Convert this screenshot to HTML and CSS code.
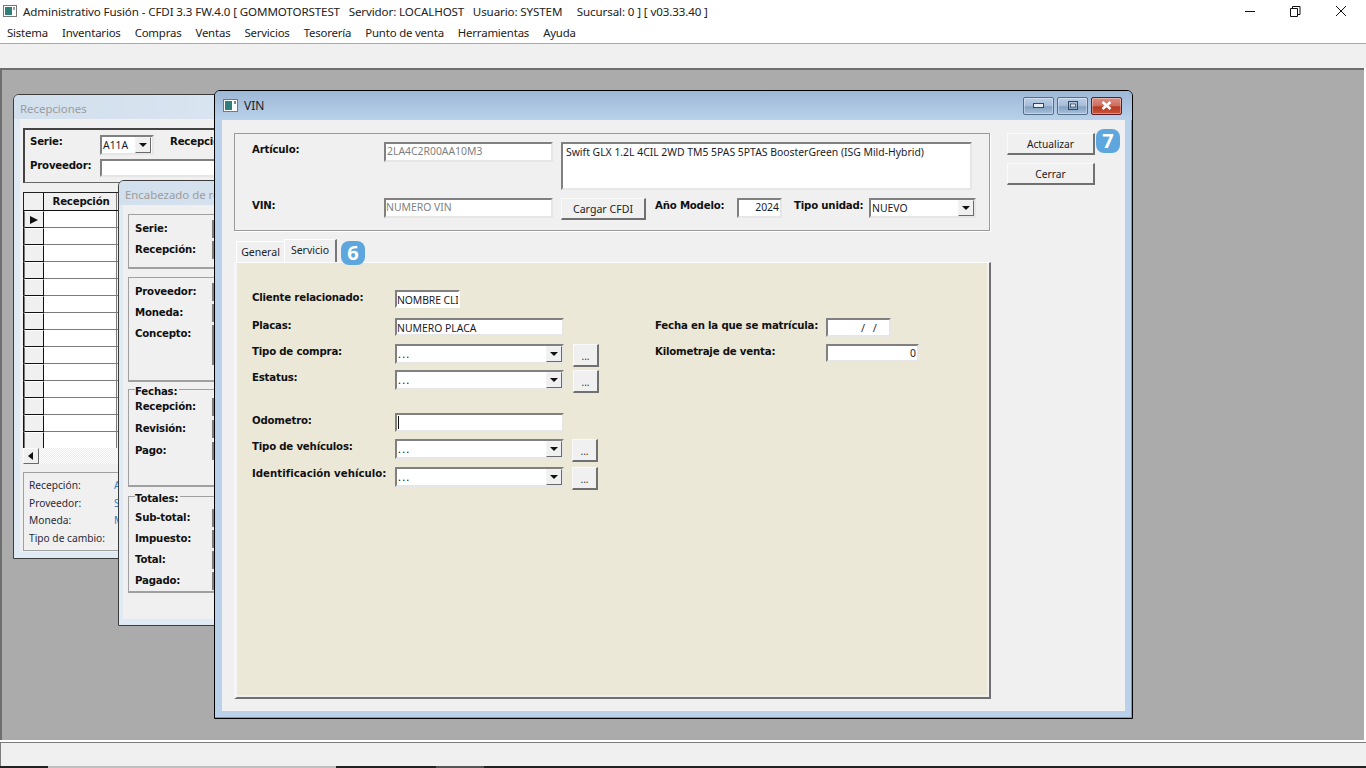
FILE: index.html
```html
<!DOCTYPE html>
<html lang="es">
<head>
<meta charset="utf-8">
<title>Administrativo Fusión</title>
<link rel="stylesheet" href="styles.css">
</head>
<body>
<div class="app">
  <header class="titlebar">
    <svg class="appicon" width="14" height="12" viewBox="0 0 14 12"><rect x=".5" y=".5" width="13" height="11" fill="#fff" stroke="#777"/><rect x="2" y="2" width="7" height="8" fill="#2f7f7a"/><rect x="10" y="2" width="2" height="3" fill="#8aa"/></svg>
    <span class="apptitle">Administrativo Fusión - CFDI 3.3 FW.4.0 [ GOMMOTORSTEST   Servidor: LOCALHOST   Usuario: SYSTEM     Sucursal: 0 ] [ v03.33.40 ]</span>
    <div class="caption">
      <svg width="46" height="20" viewBox="0 0 46 20"><path d="M19 10.5h10" stroke="#111" fill="none"/></svg>
      <svg width="46" height="20" viewBox="0 0 46 20"><path d="M18.5 7.5h7v8h-7zM20.5 7.5v-2h7.500v8h-2" stroke="#111" fill="none"/></svg>
      <svg width="46" height="20" viewBox="0 0 46 20"><path d="M18 5l10 10M28 5l-10 10" stroke="#111" fill="none"/></svg>
    </div>
  </header>
  <nav class="menubar">
    <span>Sistema</span><span>Inventarios</span><span>Compras</span><span>Ventas</span><span>Servicios</span><span>Tesorería</span><span>Punto de venta</span><span>Herramientas</span><span>Ayuda</span>
  </nav>
  <div class="toolbar"></div>
  <main class="desktop">

    <section class="win win-rec">
      <div class="wintitle inactive">Recepciones</div>
      <div class="client rec-client">
        <div class="rec-head">
          <div class="rec-row">
            <b class="lbl rec-lbl">Serie:</b>
            <div class="field combo rec-serie"><span class="val">A11A</span><i class="dd"></i></div>
            <b class="lbl rec-second">Recepción:</b>
          </div>
          <div class="rec-row rec-row2">
            <b class="lbl rec-lbl">Proveedor:</b>
            <div class="field rec-prov"></div>
          </div>
        </div>
        <div class="dgrid">
          <div class="dg-row dg-header"><span class="dg-sel"></span><b class="dg-cell">Recepción</b></div>
          <div class="dg-row"><span class="dg-sel"><svg width="10" height="8" viewBox="0 0 10 8"><path d="M1 0v8l8-4z" fill="#111"/></svg></span><span class="dg-cell"></span></div>
          <div class="dg-row"><span class="dg-sel"></span><span class="dg-cell"></span></div>
          <div class="dg-row"><span class="dg-sel"></span><span class="dg-cell"></span></div>
          <div class="dg-row"><span class="dg-sel"></span><span class="dg-cell"></span></div>
          <div class="dg-row"><span class="dg-sel"></span><span class="dg-cell"></span></div>
          <div class="dg-row"><span class="dg-sel"></span><span class="dg-cell"></span></div>
          <div class="dg-row"><span class="dg-sel"></span><span class="dg-cell"></span></div>
          <div class="dg-row"><span class="dg-sel"></span><span class="dg-cell"></span></div>
          <div class="dg-row"><span class="dg-sel"></span><span class="dg-cell"></span></div>
          <div class="dg-row"><span class="dg-sel"></span><span class="dg-cell"></span></div>
          <div class="dg-row"><span class="dg-sel"></span><span class="dg-cell"></span></div>
          <div class="dg-row"><span class="dg-sel"></span><span class="dg-cell"></span></div>
          <div class="dg-row"><span class="dg-sel"></span><span class="dg-cell"></span></div>
          <div class="dg-row dg-last"><span class="dg-sel"></span><span class="dg-cell"></span></div>
          <div class="dg-scroll"><span class="sb-btn"><svg width="6" height="8" viewBox="0 0 6 8"><path d="M5 0v8L0 4z" fill="#111"/></svg></span></div>
        </div>
        <div class="rec-info">
          <div class="info-row"><span class="info-lbl">Recepción:</span><span class="info-val">A</span></div>
          <div class="info-row"><span class="info-lbl">Proveedor:</span><span class="info-val">S</span></div>
          <div class="info-row"><span class="info-lbl">Moneda:</span><span class="info-val">M</span></div>
          <div class="info-row"><span class="info-lbl">Tipo de cambio:</span></div>
        </div>
      </div>
    </section>

    <section class="win win-enc">
      <div class="wintitle inactive">Encabezado de re</div>
      <div class="client enc-client">
        <div class="gbox g1">
          <div class="enc-row"><b class="lbl">Serie:</b><i class="edge"></i></div>
          <div class="enc-row"><b class="lbl">Recepción:</b><i class="edge"></i></div>
        </div>
        <div class="gbox g2">
          <div class="enc-row"><b class="lbl">Proveedor:</b><i class="edge"></i></div>
          <div class="enc-row"><b class="lbl">Moneda:</b><i class="edge"></i></div>
          <div class="enc-row"><b class="lbl">Concepto:</b><i class="edge tall"></i></div>
        </div>
        <div class="gbox g3">
          <b class="legend">Fechas:</b>
          <div class="enc-row"><b class="lbl">Recepción:</b><i class="edge"></i></div>
          <div class="enc-row"><b class="lbl">Revisión:</b><i class="edge"></i></div>
          <div class="enc-row"><b class="lbl">Pago:</b><i class="edge"></i></div>
        </div>
        <div class="gbox g4">
          <b class="legend">Totales:</b>
          <div class="enc-row"><b class="lbl">Sub-total:</b><i class="edge"></i></div>
          <div class="enc-row"><b class="lbl">Impuesto:</b><i class="edge"></i></div>
          <div class="enc-row"><b class="lbl">Total:</b><i class="edge"></i></div>
          <div class="enc-row"><b class="lbl">Pagado:</b><i class="edge"></i></div>
        </div>
      </div>
    </section>

    <section class="win win-vin">
      <div class="wintitle active">
        <svg class="vinicon" width="15" height="13" viewBox="0 0 15 13"><rect x=".5" y=".5" width="14" height="12" fill="#fff" stroke="#777"/><rect x="2" y="2" width="7" height="9" fill="#2f7f7a"/><rect x="11" y="2" width="2" height="3" fill="#789"/></svg>
        <span>VIN</span>
        <div class="winbtns">
          <span class="wb"><svg width="12" height="7" viewBox="0 0 12 7"><rect x=".5" y="1.500" width="10" height="4" fill="#e8eef5" stroke="#33465c"/></svg></span>
          <span class="wb"><svg width="12" height="9" viewBox="0 0 12 9"><rect x="1.500" y=".5" width="9" height="8" fill="none" stroke="#33465c"/><rect x="3.500" y="3" width="5" height="3" fill="#e8eef5" stroke="#33465c" stroke-width=".8"/></svg></span>
          <span class="wb wb-close"><svg width="13" height="9" viewBox="0 0 13 9"><path d="M2.500 1l8 7M10.500 1l-8 7" stroke="#fff" stroke-width="2.600"/></svg></span>
        </div>
      </div>
      <div class="client vin-client">
        <div class="vin-main">
          <div class="art-box">
            <div class="art-top">
              <b class="lbl art-lbl">Artículo:</b>
              <div class="field art-code disabled">2LA4C2R00AA10M3</div>
              <div class="field art-desc">Swift GLX 1.2L 4CIL 2WD TM5 5PAS 5PTAS BoosterGreen (ISG Mild-Hybrid)</div>
            </div>
            <div class="art-bottom">
              <b class="lbl art-lbl">VIN:</b>
              <div class="field art-code disabled vin-code">NUMERO VIN</div>
              <button class="btn cfdi">Cargar CFDI</button>
              <b class="lbl anio-lbl">Año Modelo:</b>
              <div class="field anio">2024</div>
              <b class="lbl tipo-lbl">Tipo unidad:</b>
              <div class="field combo tipo"><span class="val">NUEVO</span><i class="dd"></i></div>
            </div>
          </div>
          <div class="tabs">
            <span class="tab tab-off">General</span>
            <span class="tab tab-on">Servicio</span>
            <span class="badge badge6">6</span>
          </div>
          <div class="panel">
            <div class="pcol pleft">
              <div class="prow r-cli"><b class="lbl plbl">Cliente relacionado:</b><div class="field pf-cli">NOMBRE CLI</div></div>
              <div class="prow r-pla"><b class="lbl plbl">Placas:</b><div class="field pf-long">NUMERO PLACA</div></div>
              <div class="prow r-com"><b class="lbl plbl">Tipo de compra:</b><div class="field combo pf-sel"><span class="val">...</span><i class="dd"></i></div><button class="btn more">...</button></div>
              <div class="prow r-est"><b class="lbl plbl">Estatus:</b><div class="field combo pf-sel"><span class="val">...</span><i class="dd"></i></div><button class="btn more">...</button></div>
              <div class="prow r-odo"><b class="lbl plbl">Odometro:</b><div class="field pf-long pf-odo"><i class="caret"></i></div></div>
              <div class="prow r-veh"><b class="lbl plbl">Tipo de vehículos:</b><div class="field combo pf-sel"><span class="val">...</span><i class="dd"></i></div><button class="btn more more2">...</button></div>
              <div class="prow r-ide"><b class="lbl plbl">Identificación vehículo:</b><div class="field combo pf-sel"><span class="val">...</span><i class="dd"></i></div><button class="btn more more2">...</button></div>
            </div>
            <div class="pcol pright">
              <div class="prow r-fec"><b class="lbl rlbl">Fecha en la que se matrícula:</b><div class="field pf-fec"><span class="slashes">/  /</span></div></div>
              <div class="prow r-km"><b class="lbl rlbl">Kilometraje de venta:</b><div class="field pf-km">0</div></div>
            </div>
          </div>
        </div>
        <aside class="vin-side">
          <div class="side-row"><button class="btn side">Actualizar</button><span class="badge badge7">7</span></div>
          <button class="btn side">Cerrar</button>
        </aside>
      </div>
    </section>

  </main>
  <div class="statusbar"></div>
  <div class="taskstrip"><span class="ts-a"></span><span class="ts-b"></span><span class="ts-c"></span><span class="ts-d"></span><span class="ts-e"></span></div>
</div>
</body>
</html>
```
FILE: styles.css
```css
* { box-sizing: border-box; }
html, body { margin: 0; height: 100%; }
body { font-family: "Noto Sans", "Liberation Sans", sans-serif; font-size: 11px; color: #111; overflow: hidden; background: #fff; }
.app { width: 1366px; height: 768px; display: flex; flex-direction: column; }

.titlebar { height: 23px; background: #fff; display: flex; align-items: center; padding-left: 3px; }
.appicon { margin-right: 6px; margin-top: -1px; }
.apptitle { font-size: 11.600px; white-space: pre; letter-spacing: -.12px; color: #222; margin-top: -1px; }
.caption { margin-left: auto; display: flex; margin-top: -2px; padding-right: 2px; }
.caption svg { display: block; }

.menubar { height: 20px; background: #fff; display: flex; gap: 14px; padding-left: 7px; font-size: 11.400px; line-height: 19px; color: #222; letter-spacing: -.18px; }
.toolbar { height: 25px; background: #f0f0f0; border-top: 1px solid #a9a9a9; flex: none; }

.desktop { position: relative; flex: 1; background: #ababab; border-top: 2px solid #6e6e6e; border-left: 2px solid #6e6e6e; margin-right: 2px; overflow: hidden; }

.statusbar { height: 26px; background: #f0f0f0; border-top: 2px solid #fff; box-shadow: inset 0 1px 0 #7c7c7c, inset 1px 0 0 #7c7c7c; flex: none; }
.taskstrip { height: 2px; display: flex; flex: none; }
.ts-a { width: 48px; background: #222; }
.ts-b { width: 288px; background: #c0c0c0; }
.ts-c { width: 100px; background: #222; }
.ts-d { width: 48px; background: #555; }
.ts-e { flex: 1; background: #222; }

.win { position: absolute; display: flex; flex-direction: column; overflow: hidden; border: 1px solid #3c3c3c; border-top-left-radius: 6px; border-top-right-radius: 6px; }
.win-rec { left: 11px; top: 24px; width: 420px; height: 465px; background: #dfeaf5; z-index: 1; padding: 0 6px 6px; }
.win-enc { left: 116px; top: 110px; width: 420px; height: 446px; background: #dfeaf5; z-index: 2; padding: 0 6px 6px 4px; }
.win-vin { left: 212px; top: 20px; width: 919px; height: 629px; background: #b9d1ea; z-index: 3; border-color: #000; box-shadow: inset -1px -1px 0 #1cc0e6; padding: 0 7px 7px; }

.wintitle { height: 24px; flex: none; font-size: 12px; display: flex; align-items: center; }
.wintitle.inactive { color: #9c9c9c; font-size: 11.400px; background: linear-gradient(90deg, #d2dfec, #dfeaf5); margin: 0 -6px; padding: 3px 0 0 6px; }
.win-enc .wintitle.inactive { margin: 0 -6px 0 -4px; }
.wintitle.active { height: 29px; color: #222; background: linear-gradient(180deg, #9db8d6, #b9d1ea); margin: 0 -7px; padding: 0 10px 0 8px; }
.vinicon { margin-right: 6px; }

.winbtns { margin-left: auto; display: flex; gap: 3px; }
.wb { width: 31px; height: 18px; display: flex; align-items: center; justify-content: center; border: 1px solid #566d88; border-radius: 2px; background: linear-gradient(180deg, #bcd0e6 0, #a4bcd8 50%, #83a0c0 55%, #a8c2dc 100%); box-shadow: inset 0 0 0 1px rgba(255,255,255,.35); }
.wb-close { border-color: #5c1f2a; background: linear-gradient(180deg, #dc8f82 0, #cc6c5c 50%, #b53a22 55%, #c9553b 100%); }

.client { background: #f0f0f0; flex: 1; position: relative; }

.lbl { font-family: "DejaVu Sans", sans-serif; font-size: 10.200px; font-weight: 700; color: #111; white-space: nowrap; letter-spacing: -.2px; }

.field { background: #fff; border: 2px solid; border-color: #808080 #e6e6e6 #e6e6e6 #808080; font-size: 10.400px; line-height: 15px; color: #1a1a2a; padding-left: 1px; white-space: nowrap; overflow: hidden; flex: none; }
.field.disabled { color: #7f7f7f; }
.combo { display: flex; align-items: center; padding-right: 0; }
.combo .val { flex: 1; }
.dd { width: 16px; height: 16px; flex: none; background: #f0f0f0; border: 1px solid; border-color: #f4f4f4 #6a6a6a #6a6a6a #f4f4f4; position: relative; display: block; }
.dd::after { content: ""; position: absolute; left: 3px; top: 5px; border: 4px solid transparent; border-top: 4px solid #111; border-bottom: 0; }

.btn { font: 10.600px "Noto Sans", "Liberation Sans", sans-serif; color: #222; background: #f0f0f0; border: 2px solid; border-color: #fafafa #707070 #707070 #fafafa; padding: 0; border-top-width: 1px; border-left-width: 1px; }

/* Recepciones */
.rec-client { padding: 9px 0 0 3px; }
.rec-head { height: 55px; border: 1px solid #666; border-top: 2px solid #444; border-left: 2px solid #444; border-right: 0; padding: 5px 0 0 5px; }
.rec-row { display: flex; align-items: flex-start; height: 22px; }
.rec-row2 { height: 18px; }
.rec-lbl { width: 70px; padding-top: 1px; }
.rec-row2 .rec-lbl { padding-top: 3px; }
.rec-serie { width: 54px; height: 20px; }
.rec-serie .dd { margin-right: 1px; }
.rec-second { margin-left: 16px; padding-top: 1px; }
.rec-prov { width: 200px; height: 18px; margin-top: 2px; }
.dgrid { margin-top: 9px; height: 273px; display: flex; flex-direction: column; }
.dg-row { display: flex; height: 17px; flex: none; border-bottom: 1px solid #7c7c7c; }
.dg-sel { width: 20px; flex: none; background: #f0f0f0; border-right: 1px solid #111; border-bottom: 1px solid #111; border-left: 1px solid #777; border-top: 1px solid #fff; margin-bottom: -1px; display: flex; align-items: center; justify-content: center; }
.dg-cell { width: 73px; background: #fff; border-right: 1px solid #7c7c7c; flex: none; }
.dg-row > .dg-cell { flex: 1; border-right: 1px solid #7c7c7c; max-width: 73px; }
.dg-header { height: 19px; border-top: 1px solid #222; border-left: 1px solid #222; border-bottom: 1px solid #111; background: #f0f0f0; }
.dg-header .dg-cell { background: #f0f0f0; font-family: "DejaVu Sans", sans-serif; font-size: 10.200px; text-align: center; line-height: 17px; letter-spacing: -.2px; padding-left: 2px; }
.dg-header .dg-sel { border-left: 0; border-top: 0; }
.dg-row:not(.dg-header) { border-left: 1px solid #111; }
.dg-last { height: 16px; border-bottom: 0; }
.dg-scroll { height: 16px; flex: none; width: 96px; background: repeating-conic-gradient(#fff 0 25%, #ececec 0 50%) 0 0 / 2px 2px; }
.sb-btn { width: 16px; height: 16px; display: flex; align-items: center; justify-content: center; background: #f0f0f0; border: 1px solid; border-color: #fafafa #6a6a6a #6a6a6a #fafafa; }
.rec-info { margin-top: 7px; height: 79px; border: 1px solid #a0a0a0; border-right: 0; padding: 4px 0 0 5px; font-size: 10.200px; color: #2a2a3a; }
.info-row { height: 17.500px; display: flex; line-height: 17px; }
.info-lbl { width: 85px; flex: none; }
.info-val { color: #2a7fd0; }

/* Encabezado */
.enc-client { padding: 9px 0 0 5px; }
.gbox { position: relative; border: 2px solid #a0a0a0; border-top-width: 1px; border-left-width: 1px; border-right: 0; padding: 7px 0 0 6px; }
.g1 { height: 55px; }
.g2 { height: 105px; margin-top: 8px; }
.g3 { height: 98px; margin-top: 7px; padding-top: 10px; }
.g4 { height: 97px; margin-top: 9px; padding-top: 14px; }
.legend { position: absolute; left: 6px; top: -5px; background: #f0f0f0; font-family: "DejaVu Sans", sans-serif; font-size: 10.200px; padding-right: 2px; line-height: 13px; letter-spacing: -.2px; }
.enc-row { display: flex; height: 21px; align-items: flex-start; }
.g3 .enc-row { height: 22px; }
.enc-row .lbl { width: 78px; flex: none; line-height: 14px; }
.edge { display: block; width: 2px; height: 18px; background: #808080; margin-left: -1px; margin-top: -2px; flex: none; }
.edge.tall { height: 40px; }

/* VIN */
.vin-client { display: flex; padding: 13px 0 0 12px; }
.vin-main { width: 757px; flex: none; }
.art-box { height: 98px; width: 756px; border: 1px solid #9a9a9a; box-shadow: 1px 1px 0 #fff; padding: 8px 0 0 17px; }
.art-top { display: flex; align-items: flex-start; height: 56px; }
.art-bottom { display: flex; align-items: flex-start; }
.art-lbl { width: 132px; flex: none; padding-top: 1px; line-height: 13px; }
.art-code { width: 169px; height: 20px; }
.vin-code { padding-left: 0; }
.art-desc { width: 411px; height: 48px; margin-left: 8px; padding: 1px 3px; line-height: 14px; }
.cfdi { width: 85px; height: 22px; margin-left: 8px; flex: none; }
.anio-lbl { margin-left: 9px; width: 82px; flex: none; line-height: 13px; padding-top: 1px; }
.anio { width: 45px; height: 20px; text-align: right; padding-right: 1px; }
.tipo-lbl { margin-left: 12px; width: 75px; flex: none; line-height: 13px; padding-top: 1px; }
.tipo { width: 107px; height: 20px; }

.tabs { display: flex; align-items: flex-end; height: 31px; padding-left: 2px; position: relative; }
.tab { font-size: 10.500px; color: #222; display: flex; align-items: center; justify-content: center; background: #f0f0f0; }
.tab-off { width: 48px; height: 21px; border-top: 1px solid #fff; border-left: 1px solid #fff; }
.tab-on { width: 53px; height: 23px; border-top: 1px solid #fff; border-left: 1px solid #fff; border-right: 2px solid #777; padding-bottom: 3px; }
.badge { width: 24px; height: 24px; border-radius: 8px; background: #5ea7de; color: #fff; font: 700 20px/24px "Open Sans", sans-serif; text-align: center; flex: none; }
.badge6 { margin-left: 4px; margin-bottom: -3px; position: relative; z-index: 1; }

.panel { height: 437px; background: #ebe8d8; border: 2px solid; border-color: #fff #707070 #707070 #f6f6f6; border-top-width: 1px; border-left-width: 3px; box-shadow: inset -2px -2px 0 #f0f0f0; display: flex; padding: 0 0 0 15px; }
.pcol { display: flex; flex-direction: column; flex: none; }
.pleft { width: 403px; }
.prow { display: flex; align-items: flex-start; }
.plbl { width: 143px; flex: none; line-height: 13px; margin-top: 1px; }
.rlbl { width: 171px; flex: none; line-height: 13px; margin-top: 1px; }
.pf-cli { width: 65px; height: 18px; border-color: #808080 #fff #fff #808080; padding: 0; line-height: 16px; letter-spacing: -.1px; }
.pf-long { width: 169px; height: 18px; padding-left: 0; line-height: 16px; }
.pf-sel { width: 169px; height: 20px; padding-left: 0; }
.pf-sel .val { line-height: 12px; font-size: 11px; letter-spacing: 1.200px; padding-left: 1px; }
.more { width: 26px; height: 23px; margin-left: 9px; flex: none; line-height: 22px; color: #333; font-size: 10px; }
.more2 { margin-left: 8px; }
.r-cli { margin-top: 27px; height: 18px; }
.r-pla { margin-top: 10px; height: 18px; }
.r-com { margin-top: 8px; height: 23px; }
.r-est { margin-top: 3px; height: 23px; }
.r-odo { margin-top: 20px; height: 19px; }
.pf-odo { height: 19px; }
.r-veh { margin-top: 7px; height: 23px; }
.r-ide { margin-top: 5px; height: 23px; }
.r-ide .plbl { margin-top: 0; letter-spacing: .02px; }
.caret { display: block; width: 1px; height: 13px; margin: 1px 0 0 1px; background: #111; }
.r-fec { margin-top: 55px; height: 19px; }
.r-km { margin-top: 7px; height: 18px; }
.pf-fec { width: 65px; height: 19px; text-align: left; padding-left: 33px; }
.slashes { white-space: pre; color: #333; font-size: 11px; word-spacing: 1px; }
.pf-km { width: 93px; height: 18px; text-align: right; padding-right: 1px; }

.vin-side { margin-left: 16px; display: flex; flex-direction: column; gap: 8px; flex: none; }
.side-row { display: flex; align-items: flex-start; position: relative; }
.side { width: 88px; height: 22px; font-size: 10.200px; }
.badge7 { margin-top: -4px; margin-left: 1px; }
```
